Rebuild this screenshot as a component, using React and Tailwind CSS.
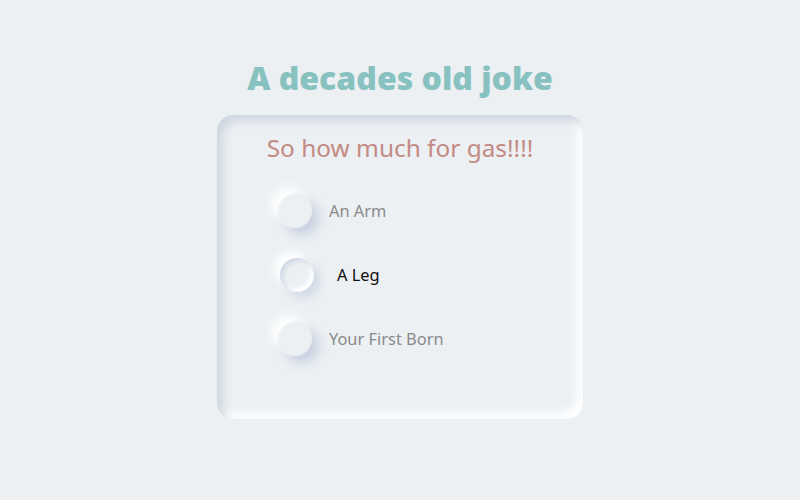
import React from "react";

function Radio({ label, checked }) {
  return (
    <div className="flex items-center h-[64px]">
      <div
        className={
          "w-[34px] h-[34px] rounded-full bg-[#ecf0f3] shrink-0 " +
          (checked
            ? "ml-[2px] shadow-[6px_6px_10px_#d1d9e6,-6px_-6px_10px_#ffffff]"
            : "shadow-[7px_7px_12px_#c8d0e0,-7px_-7px_12px_#ffffff]")
        }
      >
        {checked && (
          <div className="w-full h-full rounded-full shadow-[inset_3px_3px_5px_#d1d9e6,inset_-3px_-3px_5px_#ffffff]" />
        )}
      </div>
      <span
        className={
          "text-[16.4px] " +
          (checked ? "ml-[23px] text-[#111]" : "ml-[17px] text-[#8a8a8a]")
        }
        style={{ fontFamily: '"Noto Sans", sans-serif' }}
      >
        {label}
      </span>
    </div>
  );
}

export default function App() {
  return (
    <div
      className="min-h-screen w-full bg-[#ecf0f3] flex flex-col items-center pt-[56px]"
      style={{ fontFamily: '"Open Sans", "Noto Sans", sans-serif' }}
    >
      <h1 className="text-[32px] leading-[44px] font-extrabold text-[#88c2c0] mb-[15px]">
        A decades old joke
      </h1>
      <div className="w-[366px] h-[304px] rounded-[16px] bg-[#ecf0f3] shadow-[inset_6px_6px_10px_#cfd7e0,inset_-6px_-6px_10px_#ffffff] flex flex-col items-center pt-[16px]">
        <h2
          className="text-[24.4px] leading-[34px] text-[#c38a83]"
          style={{ fontFamily: '"Noto Sans", sans-serif' }}
        >
          So how much for gas!!!!
        </h2>
        <div className="self-start pl-[61px] mt-[14px] flex flex-col">
          <Radio label="An Arm" />
          <Radio label="A Leg" checked />
          <Radio label="Your First Born" />
        </div>
      </div>
    </div>
  );
}
